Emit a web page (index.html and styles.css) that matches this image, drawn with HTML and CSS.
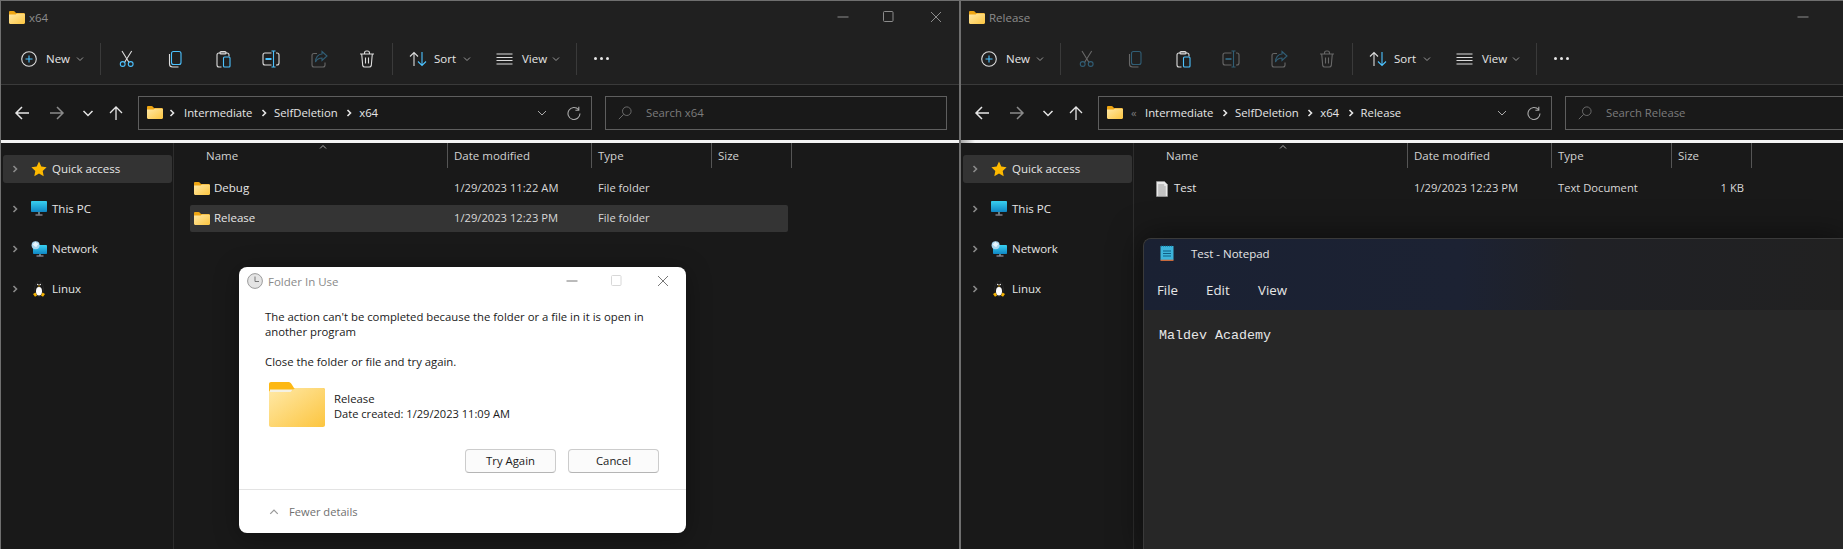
FILE: index.html
```html
<!DOCTYPE html>
<html lang="en">
<head>
<meta charset="utf-8">
<title>Explorer windows</title>
<link rel="stylesheet" href="styles.css">
</head>
<body>
<svg class="sprite" aria-hidden="true">
  <defs>
    <linearGradient id="fg" x1="0" y1="0" x2="1" y2="1"><stop offset="0" stop-color="#ffe9a8"/><stop offset="1" stop-color="#fcc53f"/></linearGradient>
    <linearGradient id="mon" x1="0" y1="0" x2="0" y2="1"><stop offset="0" stop-color="#38d0f0"/><stop offset="1" stop-color="#0f86c4"/></linearGradient>
    <symbol id="folder" viewBox="0 0 16 13"><path fill="#eea512" d="M0 1.2C0 .5.5 0 1.2 0h3.3c.5 0 .9.2 1.2.6L7 2h7.5c.8 0 1.5.7 1.5 1.5V6H0z"/><path fill="url(#fg)" d="M0 3.4h6.6L8 2.4h6.8c.7 0 1.2.5 1.2 1.2v8.2c0 .7-.5 1.2-1.2 1.2H1.2C.5 13 0 12.500 0 11.800z"/></symbol>
    <symbol id="bigfolder" viewBox="0 0 56 45"><path fill="#fdb813" d="M0 2C0 .9.9 0 2 0h17c1.500 0 2.500.6 3.500 2L25 6h29c1.100 0 2 .9 2 2v10H0z"/><path fill="url(#fg)" d="M1 8.500h22L26 6h28c1.100 0 2 .9 2 2v35c0 1.100-.9 2-2 2H2c-1.100 0-2-.9-2-2V9.500z"/><path fill="#f4f1e4" d="M1 7.500h23l-2.500 2.500H1z"/></symbol>
    <symbol id="i-new" viewBox="0 0 16 16"><circle class="w" cx="8" cy="8" r="7.300"/><path class="b" d="M8 4.500v7M4.500 8h7"/></symbol>
    <symbol id="i-cut" viewBox="0 0 20 20"><path class="w" d="M5 2l7 11.500M14.700 2L7.500 13.500"/><circle class="b" cx="5.700" cy="15" r="2.400"/><circle class="b" cx="13.700" cy="15" r="2.400"/></symbol>
    <symbol id="i-copy" viewBox="0 0 20 20"><rect class="b" x="6.500" y="2.500" width="9.500" height="13" rx="2"/><path class="w" d="M4.500 5v10a3 3 0 0 0 3 3h6"/></symbol>
    <symbol id="i-paste" viewBox="0 0 20 20"><path class="w" d="M8.500 18H6a2 2 0 0 1-2-2V6a2 2 0 0 1 2-2h8a2 2 0 0 1 2 2v1.500"/><rect class="w" x="7" y="2.500" width="6" height="2.500" rx="1"/><rect class="b" x="10.500" y="8" width="6.500" height="10" rx="1"/></symbol>
    <symbol id="i-rename" viewBox="0 0 20 20"><path class="w" d="M10.500 4H4a2 2 0 0 0-2 2v8a2 2 0 0 0 2 2h6.500M15 4h1a2 2 0 0 1 2 2v8a2 2 0 0 1-2 2h-1"/><path class="b" d="M12.500 2v16M10.500 2h4M10.500 18h4"/><rect class="bf" x="4.500" y="9" width="6" height="2"/></symbol>
    <symbol id="i-share" viewBox="0 0 20 20"><path class="w" d="M8 4.500H5a2 2 0 0 0-2 2V16a2 2 0 0 0 2 2h9a2 2 0 0 0 2-2v-2.500"/><path class="b" d="M13 2.500L18 7l-5 4.500V9c-3 0-5 1-6.500 4 0-4.500 2.500-8 6.500-8z"/></symbol>
    <symbol id="i-del" viewBox="0 0 20 20"><path class="w" d="M3 5h14M7.500 5V4a2 2 0 0 1 2-2h1a2 2 0 0 1 2 2v1M4.700 5l1 11.500A2 2 0 0 0 7.700 18h4.600a2 2 0 0 0 2-1.500l1-11.500M8.500 8.500v6M11.500 8.500v6"/></symbol>
    <symbol id="i-sort" viewBox="0 0 18 16"><path class="w" d="M5 15V1.500M1 5.500l4-4 4 4"/><path class="b" d="M13 1v13.500M9 10.500l4 4 4-4"/></symbol>
    <symbol id="i-view" viewBox="0 0 17 14"><path class="w" d="M.500 2h16M.500 5.500h16M.500 8.500h16M.500 12h16"/></symbol>
    <symbol id="i-chev" viewBox="0 0 8 8"><path d="M1 2.500l3 3 3-3" fill="none" stroke="currentColor" stroke-width="1"/></symbol>
    <symbol id="i-right" viewBox="0 0 8 10"><path d="M2.500 2l3 3-3 3" fill="none" stroke="currentColor" stroke-width="1.600"/></symbol>
    <symbol id="i-back" viewBox="0 0 16 16"><path d="M15 8H2M8 2L2 8l6 6" fill="none" stroke="currentColor" stroke-width="1.500"/></symbol>
    <symbol id="i-fwd" viewBox="0 0 16 16"><path d="M1 8h13M8 2l6 6-6 6" fill="none" stroke="currentColor" stroke-width="1.500"/></symbol>
    <symbol id="i-up" viewBox="0 0 16 16"><path d="M8 15V2M2 8l6-6 6 6" fill="none" stroke="currentColor" stroke-width="1.300"/></symbol>
    <symbol id="i-down" viewBox="0 0 16 16"><path d="M3.500 6l4.500 4.500L12.500 6" fill="none" stroke="currentColor" stroke-width="1.500"/></symbol>
    <symbol id="i-drop" viewBox="0 0 16 16"><path d="M4 6l4 4 4-4" fill="none" stroke="currentColor" stroke-width="1"/></symbol>
    <symbol id="i-refresh" viewBox="0 0 14 14"><path d="M11.500 3.500A6 6 0 1 0 13 7.500M11.800.8v3.400H8.400" fill="none" stroke="currentColor" stroke-width="1.100"/></symbol>
    <symbol id="i-search" viewBox="0 0 14 14"><circle cx="8.800" cy="5.200" r="4.300" fill="none" stroke="currentColor"/><path d="M5.700 8.300L.8 13.200" fill="none" stroke="currentColor"/></symbol>
    <symbol id="i-star" viewBox="0 0 16 16"><path fill="#fdb900" d="M8 .6l2.300 4.900 5.300.7-3.900 3.700 1 5.300L8 12.600l-4.700 2.600 1-5.300L.4 6.200l5.300-.7z"/></symbol>
    <symbol id="i-pc" viewBox="0 0 16 16"><rect y="0" width="16" height="11" rx=".8" fill="url(#mon)"/><rect x="7.300" y="11" width="1.400" height="2.500" fill="#8aa"/><rect x="4.500" y="13.500" width="7" height="1" fill="#aab"/></symbol>
    <symbol id="i-net" viewBox="0 0 16 16"><rect x="2" y="4" width="14" height="9" rx=".8" fill="url(#mon)"/><rect x="8.300" y="13" width="1.400" height="1.800" fill="#8aa"/><rect x="5.500" y="14.500" width="7" height="1" fill="#aab"/><circle cx="4.600" cy="4.300" r="4" fill="#a9d6ee"/><path d="M1.500 3.500c1.500-1 2-2 3-3 .5 1.500 2 2 3.500 2.500-1 1-2 1-2.500 3-1.500 0-2.500-1.500-4-2.500z" fill="#e8f4fb"/></symbol>
    <symbol id="i-tux" viewBox="0 0 16 16"><ellipse cx="8" cy="8" rx="4.500" ry="7.500" fill="#1a1a1a" stroke="#3a3a3a" stroke-width=".4"/><ellipse cx="8" cy="10.300" rx="3" ry="4.300" fill="#fff"/><circle cx="6.800" cy="3.500" r=".7" fill="#fff"/><circle cx="9.200" cy="3.500" r=".7" fill="#fff"/><path fill="#f5b300" d="M7 4.500h2L8 6zM2 13l2.500-1.500L6 14.500l-2 1.300zM14 13l-2.500-1.500L10 14.500l2 1.300z"/></symbol>
    <symbol id="i-file" viewBox="0 0 12 16"><path fill="#e8e8e8" stroke="#9a9a9a" stroke-width=".6" d="M.5.500h8L11.500 3.500V15.500H.5z"/><path stroke="#888" stroke-width=".8" d="M2.200 4h6M2.200 6h7.600M2.200 8h7.600M2.200 10h7.600M2.200 12h7.600M2.200 14h7.600"/></symbol>
    <symbol id="i-clock" viewBox="0 0 16 16"><circle cx="8" cy="8" r="7.400" fill="#e4e4e4" stroke="#9b9b9b" stroke-width="1"/><path d="M8 3.500V8.500H12" fill="none" stroke="#777" stroke-width="1"/></symbol>
    <symbol id="i-note" viewBox="0 0 14 16"><rect x=".5" y="1" width="13" height="14" fill="#3cb4dc"/><path stroke="#0f5f85" d="M3 6h8M3 8.500h8M3 11h8"/><path stroke="#0c7fa8" stroke-dasharray="1 1" d="M1 1.200h12"/><rect x=".5" y="14.700" width="13" height="1.300" fill="#c8693c"/></symbol>
    <symbol id="i-min" viewBox="0 0 12 12"><path d="M.500 6h11" fill="none" stroke="currentColor"/></symbol>
    <symbol id="i-max" viewBox="0 0 12 12"><rect x=".5" y=".5" width="9.500" height="10" rx="1" fill="none" stroke="currentColor"/></symbol>
    <symbol id="i-close" viewBox="0 0 12 12"><path d="M1 1l10 10M11 1L1 11" fill="none" stroke="currentColor"/></symbol>
  </defs>
</svg>

<section class="win win-left">
  <header class="titlebar">
    <svg class="ic-folder"><use href="#folder"/></svg><span class="title-text">x64</span>
    <div class="caption"><svg class="cap cap-min"><use href="#i-min"/></svg><svg class="cap cap-max"><use href="#i-max"/></svg><svg class="cap"><use href="#i-close"/></svg></div>
  </header>
  <div class="toolbar">
    <div class="tb-new"><svg class="ic16"><use href="#i-new"/></svg><span class="tb-label">New</span><svg class="chev"><use href="#i-chev"/></svg></div>
    <i class="tb-sep"></i>
    <div class="tb-icons">
      <svg class="tb-ic"><use href="#i-cut"/></svg>
      <svg class="tb-ic"><use href="#i-copy"/></svg>
      <svg class="tb-ic"><use href="#i-paste"/></svg>
      <svg class="tb-ic"><use href="#i-rename"/></svg>
      <svg class="tb-ic dim"><use href="#i-share"/></svg>
      <svg class="tb-ic"><use href="#i-del"/></svg>
    </div>
    <i class="tb-sep"></i>
    <div class="tb-sort"><svg class="ic-sort"><use href="#i-sort"/></svg><span class="tb-label">Sort</span><svg class="chev"><use href="#i-chev"/></svg></div>
    <div class="tb-view"><svg class="ic-view"><use href="#i-view"/></svg><span class="tb-label">View</span><svg class="chev"><use href="#i-chev"/></svg></div>
    <i class="tb-sep"></i>
    <div class="tb-more"><b></b><b></b><b></b></div>
  </div>
  <div class="navbar">
    <svg class="nav nav-back"><use href="#i-back"/></svg>
    <svg class="nav nav-fwd"><use href="#i-fwd"/></svg>
    <svg class="nav nav-down"><use href="#i-down"/></svg>
    <svg class="nav nav-up"><use href="#i-up"/></svg>
    <div class="addr">
      <svg class="ic-folder"><use href="#folder"/></svg>
      <svg class="crumb-sep first"><use href="#i-right"/></svg><span>Intermediate</span>
      <svg class="crumb-sep"><use href="#i-right"/></svg><span>SelfDeletion</span>
      <svg class="crumb-sep"><use href="#i-right"/></svg><span>x64</span>
      <svg class="addr-drop"><use href="#i-drop"/></svg>
      <svg class="addr-ref"><use href="#i-refresh"/></svg>
    </div>
    <div class="search"><svg class="ic-search"><use href="#i-search"/></svg><span>Search x64</span></div>
  </div>
  <div class="rule"></div>
  <div class="body">
    <nav class="side">
      <div class="side-row active"><svg class="side-chev"><use href="#i-right"/></svg><svg class="ic16"><use href="#i-star"/></svg><span>Quick access</span></div>
      <div class="side-row"><svg class="side-chev"><use href="#i-right"/></svg><svg class="ic16"><use href="#i-pc"/></svg><span>This PC</span></div>
      <div class="side-row"><svg class="side-chev"><use href="#i-right"/></svg><svg class="ic16"><use href="#i-net"/></svg><span>Network</span></div>
      <div class="side-row"><svg class="side-chev"><use href="#i-right"/></svg><svg class="ic16"><use href="#i-tux"/></svg><span>Linux</span></div>
    </nav>
    <main class="files">
      <div class="cols">
        <div class="col col-name">Name<svg class="sort-caret"><use href="#i-chev"/></svg></div>
        <div class="col col-date">Date modified</div>
        <div class="col col-type">Type</div>
        <div class="col col-size">Size</div>
      </div>
      <div class="rows">
        <div class="row"><div class="cell-name"><svg class="ic-folder"><use href="#folder"/></svg><span>Debug</span></div><div>1/29/2023 11:22 AM</div><div>File folder</div><div></div></div>
        <div class="row selected"><div class="cell-name"><svg class="ic-folder"><use href="#folder"/></svg><span>Release</span></div><div>1/29/2023 12:23 PM</div><div>File folder</div><div></div></div>
      </div>
    </main>
  </div>
</section>

<section class="win win-right">
  <header class="titlebar">
    <svg class="ic-folder"><use href="#folder"/></svg><span class="title-text">Release</span>
    <div class="caption"><svg class="cap cap-min"><use href="#i-min"/></svg></div>
  </header>
  <div class="toolbar">
    <div class="tb-new"><svg class="ic16"><use href="#i-new"/></svg><span class="tb-label">New</span><svg class="chev"><use href="#i-chev"/></svg></div>
    <i class="tb-sep"></i>
    <div class="tb-icons">
      <svg class="tb-ic dim"><use href="#i-cut"/></svg>
      <svg class="tb-ic dim"><use href="#i-copy"/></svg>
      <svg class="tb-ic"><use href="#i-paste"/></svg>
      <svg class="tb-ic dim"><use href="#i-rename"/></svg>
      <svg class="tb-ic dim"><use href="#i-share"/></svg>
      <svg class="tb-ic dim"><use href="#i-del"/></svg>
    </div>
    <i class="tb-sep"></i>
    <div class="tb-sort"><svg class="ic-sort"><use href="#i-sort"/></svg><span class="tb-label">Sort</span><svg class="chev"><use href="#i-chev"/></svg></div>
    <div class="tb-view"><svg class="ic-view"><use href="#i-view"/></svg><span class="tb-label">View</span><svg class="chev"><use href="#i-chev"/></svg></div>
    <i class="tb-sep"></i>
    <div class="tb-more"><b></b><b></b><b></b></div>
  </div>
  <div class="navbar">
    <svg class="nav nav-back"><use href="#i-back"/></svg>
    <svg class="nav nav-fwd"><use href="#i-fwd"/></svg>
    <svg class="nav nav-down"><use href="#i-down"/></svg>
    <svg class="nav nav-up"><use href="#i-up"/></svg>
    <div class="addr">
      <svg class="ic-folder"><use href="#folder"/></svg>
      <span class="crumb-more">«</span><span>Intermediate</span>
      <svg class="crumb-sep"><use href="#i-right"/></svg><span>SelfDeletion</span>
      <svg class="crumb-sep"><use href="#i-right"/></svg><span>x64</span>
      <svg class="crumb-sep"><use href="#i-right"/></svg><span>Release</span>
      <svg class="addr-drop"><use href="#i-drop"/></svg>
      <svg class="addr-ref"><use href="#i-refresh"/></svg>
    </div>
    <div class="search"><svg class="ic-search"><use href="#i-search"/></svg><span>Search Release</span></div>
  </div>
  <div class="rule rule-fade"></div>
  <div class="body">
    <nav class="side">
      <div class="side-row active"><svg class="side-chev"><use href="#i-right"/></svg><svg class="ic16"><use href="#i-star"/></svg><span>Quick access</span></div>
      <div class="side-row"><svg class="side-chev"><use href="#i-right"/></svg><svg class="ic16"><use href="#i-pc"/></svg><span>This PC</span></div>
      <div class="side-row"><svg class="side-chev"><use href="#i-right"/></svg><svg class="ic16"><use href="#i-net"/></svg><span>Network</span></div>
      <div class="side-row"><svg class="side-chev"><use href="#i-right"/></svg><svg class="ic16"><use href="#i-tux"/></svg><span>Linux</span></div>
    </nav>
    <main class="files">
      <div class="cols">
        <div class="col col-name">Name<svg class="sort-caret"><use href="#i-chev"/></svg></div>
        <div class="col col-date">Date modified</div>
        <div class="col col-type">Type</div>
        <div class="col col-size">Size</div>
      </div>
      <div class="rows">
        <div class="row"><div class="cell-name"><svg class="ic-file"><use href="#i-file"/></svg><span>Test</span></div><div>1/29/2023 12:23 PM</div><div>Text Document</div><div class="cell-size">1 KB</div></div>
      </div>
    </main>
  </div>
</section>

<div class="dialog">
  <div class="dlg-title">
    <svg class="ic16"><use href="#i-clock"/></svg><span>Folder In Use</span>
    <div class="dlg-caption"><svg class="cap dlg-min"><use href="#i-min"/></svg><svg class="cap dlg-max"><use href="#i-max"/></svg><svg class="cap dlg-close"><use href="#i-close"/></svg></div>
  </div>
  <div class="dlg-body">
    <p class="dlg-msg">The action can't be completed because the folder or a file in it is open in another program</p>
    <p class="dlg-hint">Close the folder or file and try again.</p>
    <div class="dlg-file">
      <svg class="dlg-folder"><use href="#bigfolder"/></svg>
      <div class="dlg-meta"><div>Release</div><div class="dlg-date">Date created: 1/29/2023 11:09 AM</div></div>
    </div>
    <div class="dlg-actions"><button class="dlg-btn" type="button">Try Again</button><button class="dlg-btn" type="button">Cancel</button></div>
  </div>
  <div class="dlg-foot"><svg class="dlg-up"><use href="#i-chev"/></svg><span>Fewer details</span></div>
</div>

<div class="notepad">
  <div class="np-title"><svg class="np-icon"><use href="#i-note"/></svg><span>Test - Notepad</span></div>
  <div class="np-menu"><span>File</span><span>Edit</span><span>View</span></div>
  <div class="np-text">Maldev Academy</div>
</div>
</body>
</html>
```
FILE: styles.css
```css
* { box-sizing: border-box; }
html, body { margin: 0; height: 100%; }
body {
  position: relative;
  display: flex;
  width: 1843px;
  height: 549px;
  overflow: hidden;
  background: #191919;
  color: #e6e6e6;
  font: 11.5px/15px "Open Sans", "Noto Sans", sans-serif;
}
svg { display: block; flex: none; overflow: visible; }
.sprite { position: absolute; width: 0; height: 0; }
.w { fill: none; stroke: #dcdcdc; stroke-width: 1.1; }
.b { fill: none; stroke: #4cc2ff; stroke-width: 1.1; }
.bf { fill: #4cc2ff; }

.win { flex: none; height: 549px; border-top: 1px solid #6f6f6f; background: #191919; overflow: hidden; }
.win-left { width: 959px; border-left: 1px solid #6f6f6f; }
.win-right { width: 960px; border-left: 2px solid #6f6f6f; }

.titlebar { display: flex; align-items: center; height: 32px; padding-left: 8px; background: #202020; }
.ic-folder { width: 16px; height: 13px; }
.title-text { margin-left: 4px; color: #8c8c8c; }
.caption { position: relative; left: -7px; display: flex; align-items: center; width: 115px; margin-left: auto; color: #8c8c8c; }
.cap { width: 12px; height: 12px; }
.cap-max { margin-left: 34px; }
.caption .cap:last-child:not(.cap-min) { margin-left: 35px; }

.toolbar { display: flex; align-items: center; height: 52px; padding-left: 20px; background: #202020; border-bottom: 1px solid #3a3a3a; }
.tb-label { color: #e6e6e6; }
.chev { width: 8px; height: 8px; color: #9a9a9a; }
.ic16 { width: 16px; height: 16px; }
.tb-new { display: flex; align-items: center; width: 79px; gap: 9px; }
.tb-new .tb-label { width: 24px; }
.tb-new .chev { margin-left: -3px; }
.tb-sep { display: block; width: 1px; height: 32px; background: #3a3a3a; }
.tb-icons { display: flex; margin: 0 1px 0 2px; }
.tb-ic { width: 48px; height: 20px; }
.dim { opacity: .38; }
.tb-sort { display: flex; align-items: center; width: 87px; margin-left: 16px; }
.ic-sort { width: 18px; height: 16px; }
.tb-sort .tb-label { width: 29px; margin-left: 7px; }
.tb-view { display: flex; align-items: center; width: 80px; }
.ic-view { width: 17px; height: 14px; }
.tb-view .tb-label { width: 30px; margin-left: 9px; }
.tb-more { display: flex; gap: 3px; margin-left: 17px; }
.tb-more b { width: 3px; height: 3px; border-radius: 50%; background: #e6e6e6; }

.navbar { display: flex; align-items: center; height: 55px; background: #191919; color: #e6e6e6; font-size: 11.33px; }
.nav { width: 16px; height: 16px; }
.nav-back { margin-left: 13px; }
.nav-fwd { margin-left: 19px; color: #8a8a8a; }
.nav-down { margin-left: 15px; }
.nav-up { margin-left: 12px; }
.addr { display: flex; align-items: center; width: 454px; height: 34px; margin-left: 14px; padding-left: 8px; border: 1px solid #5e5e5e; color: #e6e6e6; }
.crumb-sep { width: 8px; height: 10px; margin: 0 6px 0 7.500px; }
.crumb-sep.first { margin: 0 8px 0 5px; }
.crumb-more { width: 22px; padding-left: 8px; color: #7a7a7a; }
.addr-drop { width: 16px; height: 16px; margin-left: auto; color: #aaa; }
.addr-ref { width: 14px; height: 14px; margin: 0 10px 0 17px; color: #aaa; }
.search { display: flex; align-items: center; width: 342px; height: 34px; margin-left: 13px; padding-left: 12px; border: 1px solid #5e5e5e; color: #7c7c7c; }
.ic-search { width: 14px; height: 14px; margin-right: 14px; color: #6a6a6a; }

.rule { height: 3px; background: #f4f4f4; }
.rule-fade { background: linear-gradient(90deg, #a8a8a8, #f4f4f4 14px); }

.body { display: flex; height: 406px; }
.side { width: 173px; padding: 12px 0 0 2px; border-right: 1px solid #2d2d2d; }
.side-row { display: flex; align-items: center; width: 169px; height: 28px; margin-bottom: 12px; border-radius: 3px; }
.side-row.active { background: #333; }
.side-chev { width: 8px; height: 10px; margin: 0 12px 0 8px; color: #8a8a8a; }
.side-row span { margin-left: 5px; padding-bottom: 2px; }

.files { flex: 1; }
.cols { display: flex; height: 25px; color: #d2d2d2; }
.col { position: relative; height: 25px; padding: 5px 0 0 6px; border-right: 1px solid #555; }
.col-name { width: 274px; padding-left: 32px; }
.col-date { width: 144px; }
.col-type { width: 120px; }
.col-size { width: 80px; }
.sort-caret { position: absolute; left: 145px; top: 0; width: 8px; height: 8px; transform: scaleY(-1); color: #aaa; }
.rows { display: flex; flex-direction: column; gap: 3px; padding: 7px 0 0 16px; }
.row { display: grid; grid-template-columns: 264px 144px 120px 66px; align-items: center; width: 598px; height: 27px; padding-bottom: 2px; border-radius: 2px; color: #d8d8d8; font-size: 11.2px; }
.row.selected { background: #343434; }
.cell-name { display: flex; align-items: center; gap: 4px; padding-left: 4px; color: #e6e6e6; font-size: 11.5px; }
.cell-name svg { position: relative; top: 1px; }
.ic-file { width: 12px; height: 16px; margin: 0 2px; }
.cell-size { text-align: right; }

.dialog { position: absolute; left: 239px; top: 267px; width: 447px; height: 266px; display: flex; flex-direction: column; background: #fff; border-radius: 8px; color: #1a1a1a; box-shadow: 0 4px 24px rgba(0,0,0,.35); }
.dlg-title { display: flex; align-items: center; height: 28px; padding-left: 8px; color: #8a8a8a; }
.dlg-title span { margin-left: 5px; }
.dlg-caption { display: flex; align-items: center; margin-left: auto; margin-right: 17px; }
.dlg-min { color: #777; }
.dlg-max { margin-left: 33px; color: #d8d8d8; }
.dlg-close { margin-left: 34px; color: #777; }
.dlg-body { padding: 14px 27px 0 26px; font-size: 11.33px; }
.dlg-msg { margin: 0; }
.dlg-hint { margin: 15px 0 0; }
.dlg-file { display: flex; margin: 13px 0 0 4px; }
.dlg-folder { width: 56px; height: 45px; }
.dlg-meta { margin: 9px 0 0 9px; }
.dlg-date { font-size: 11.1px; }
.dlg-actions { display: flex; justify-content: flex-end; gap: 12px; margin-top: 22px; }
.dlg-btn { width: 91px; height: 24px; padding: 0 0 2px; border: 1px solid #ccc; border-bottom-color: #b5b5b5; border-radius: 4px; background: #fbfbfb; color: #1a1a1a; font: inherit; }
.dlg-foot { display: flex; align-items: center; height: 44px; margin-top: auto; padding-left: 30px; border-top: 1px solid #e3e3e3; color: #6f6f6f; font-size: 11.15px; }
.dlg-up { width: 10px; height: 10px; transform: scaleY(-1); color: #999; }
.dlg-foot span { margin-left: 10px; }

.notepad { position: absolute; left: 1143px; top: 238px; width: 700px; height: 311px; display: flex; flex-direction: column; background: #272727; border: 1px solid #3a3a3a; border-width: 1px 0 0 1px; border-top-left-radius: 8px; box-shadow: 0 0 32px rgba(0,0,0,.55); overflow: hidden; }
.np-title { display: flex; align-items: center; height: 32px; padding: 0 0 4px 16px; background: linear-gradient(90deg, #1a2133, #1c2233 45%, #202126 62%, #212121); }
.np-icon { width: 14px; height: 16px; }
.np-title span { margin-left: 17px; }
.np-menu { display: grid; grid-template-columns: 49px 52px auto; align-items: center; height: 39px; padding-left: 13px; background: linear-gradient(90deg, #1a2133, #1c2233 45%, #202126 62%, #212121); font-size: 13.3px; }
.np-text { padding: 18px 0 0 15px; font: 13.33px/16px "Liberation Mono", monospace; color: #e6e6e6; }
```
